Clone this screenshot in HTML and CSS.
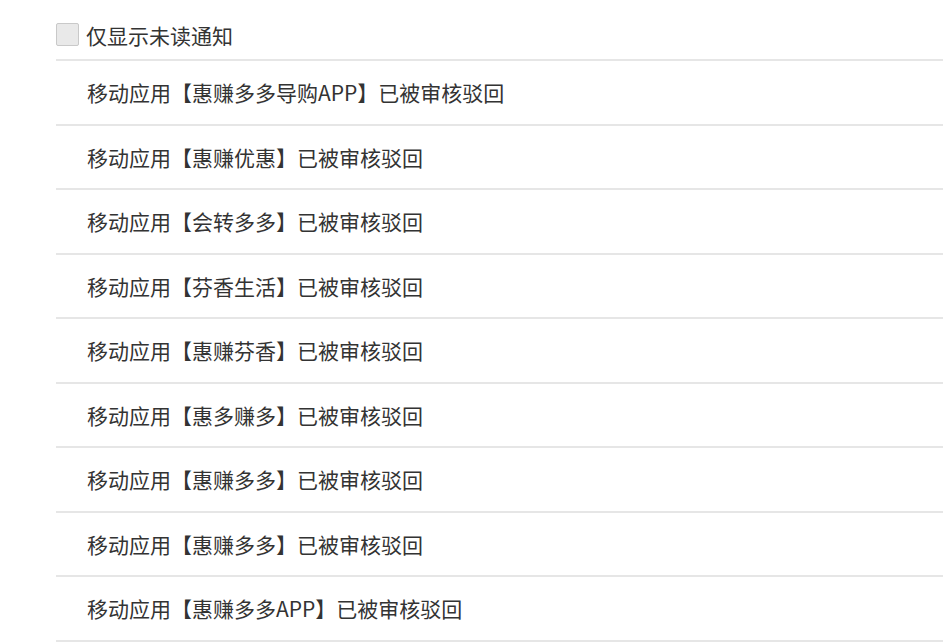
FILE: index.html
```html
<!DOCTYPE html>
<html lang="zh-CN">
<head>
  <meta charset="UTF-8">
  <meta name="viewport" content="width=device-width, initial-scale=1.0">
  <title>消息通知</title>
  <link rel="stylesheet" href="styles.css">
</head>
<body>
  <div class="notice-panel">
    <label class="unread-filter">
      <input type="checkbox" class="unread-check">
      <span>仅显示未读通知</span>
    </label>

    <ul class="notice-list">
      <li class="notice-item">移动应用【惠赚多多导购APP】已被审核驳回</li>
      <li class="notice-item">移动应用【惠赚优惠】已被审核驳回</li>
      <li class="notice-item">移动应用【会转多多】已被审核驳回</li>
      <li class="notice-item">移动应用【芬香生活】已被审核驳回</li>
      <li class="notice-item">移动应用【惠赚芬香】已被审核驳回</li>
      <li class="notice-item">移动应用【惠多赚多】已被审核驳回</li>
      <li class="notice-item">移动应用【惠赚多多】已被审核驳回</li>
      <li class="notice-item">移动应用【惠赚多多】已被审核驳回</li>
      <li class="notice-item">移动应用【惠赚多多APP】已被审核驳回</li>
    </ul>
  </div>
</body>
</html>
```

FILE: styles.css
```css
body {
  margin: 0;
  background-color: #fff;
  font-family: "Noto Sans CJK SC", "Microsoft YaHei", sans-serif;
  color: #333;
}

.notice-panel {
  padding-left: 56px;
}

.unread-filter {
  box-sizing: border-box;
  display: flex;
  align-items: center;
  height: 59px;
  padding-top: 10px;
  font-size: 21px;
  cursor: pointer;
}

.unread-check {
  appearance: none;
  -webkit-appearance: none;
  width: 23px;
  height: 23px;
  margin: 0 7px 0 0;
  border: 1px solid #c9c9c9;
  border-radius: 2px;
  background-color: #e9e9e9;
}

.unread-check:checked {
  background-color: #4a90e2;
  border-color: #4a90e2;
}

.notice-list {
  list-style: none;
  margin: 0;
  padding: 0;
  border-top: 2px solid #e6e6e6;
}

.notice-item {
  display: flex;
  align-items: center;
  height: 62.5px;
  padding-left: 31px;
  font-size: 21px;
  border-bottom: 2px solid #e6e6e6;
}
```
